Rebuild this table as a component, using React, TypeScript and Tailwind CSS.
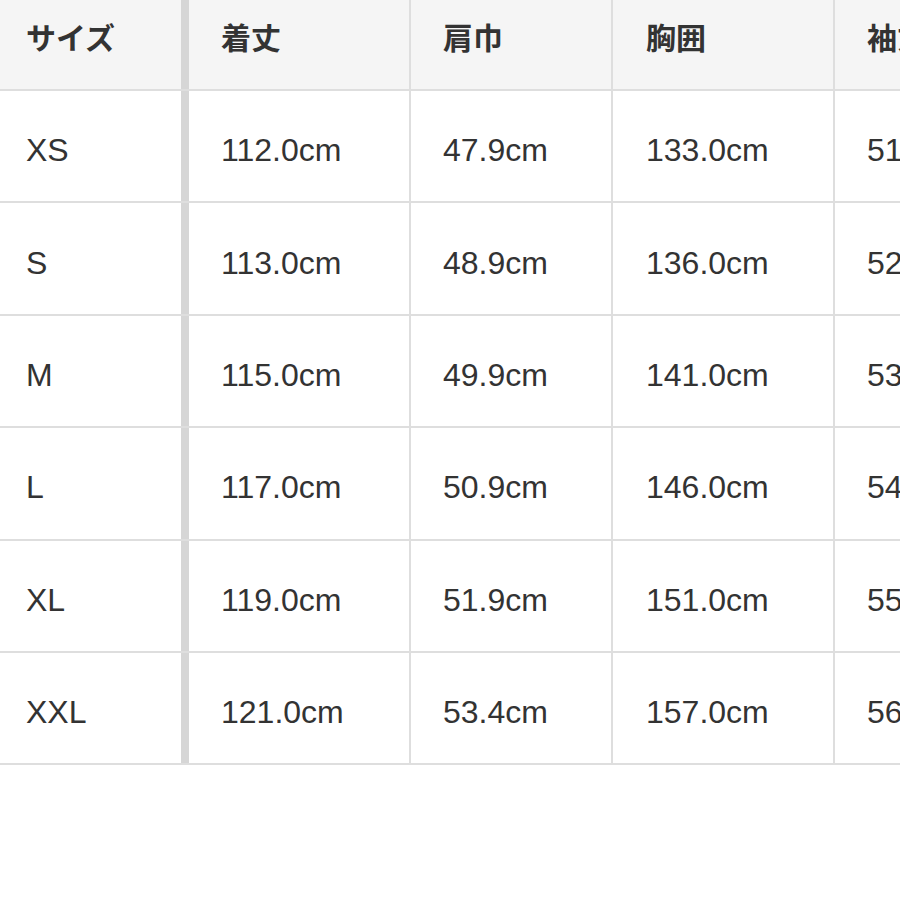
import React from 'react';

const headers = ['サイズ', '着丈', '肩巾', '胸囲', '袖丈'];

const rows = [
  ['XS', '112.0cm', '47.9cm', '133.0cm', '51.0cm'],
  ['S', '113.0cm', '48.9cm', '136.0cm', '52.0cm'],
  ['M', '115.0cm', '49.9cm', '141.0cm', '53.0cm'],
  ['L', '117.0cm', '50.9cm', '146.0cm', '54.0cm'],
  ['XL', '119.0cm', '51.9cm', '151.0cm', '55.0cm'],
  ['XXL', '121.0cm', '53.4cm', '157.0cm', '56.0cm'],
];

// fixed column widths (border included) + right borders
const colClass = [
  'w-[189px] shrink-0 pl-[26px] border-r-[8px] border-[#d6d6d6]',
  'w-[222px] shrink-0 pl-[32px] border-r-2 border-[#dedede]',
  'w-[202px] shrink-0 pl-[32px] border-r-2 border-[#dedede]',
  'w-[222px] shrink-0 pl-[33px] border-r-2 border-[#dedede]',
  'w-[200px] shrink-0 pl-[32px]',
];

const App: React.FC = () => {
  return (
    <div className="w-[900px] h-[900px] bg-white overflow-hidden">
      <div className="flex w-max h-[91px] bg-[#f5f5f5] border-b-2 border-[#dedede]">
        {headers.map((h, i) => (
          <div
            key={h}
            className={`${colClass[i]} flex items-center pb-[18px] text-[30px] font-bold text-[#333] leading-none`}
            style={{ fontFamily: '"Noto Sans CJK JP", sans-serif' }}
          >
            {h}
          </div>
        ))}
      </div>
      {rows.map(r => (
        <div key={r[0]} className="flex w-max h-[112.4px] border-b-2 border-[#dedede]">
          {r.map((c, i) => (
            <div
              key={i}
              className={`${colClass[i]} flex items-center pt-[8px] text-[32px] text-[#333] leading-none`}
              style={{ fontFamily: '"Liberation Sans", Arial, sans-serif' }}
            >
              {c}
            </div>
          ))}
        </div>
      ))}
    </div>
  );
};

export default App;
